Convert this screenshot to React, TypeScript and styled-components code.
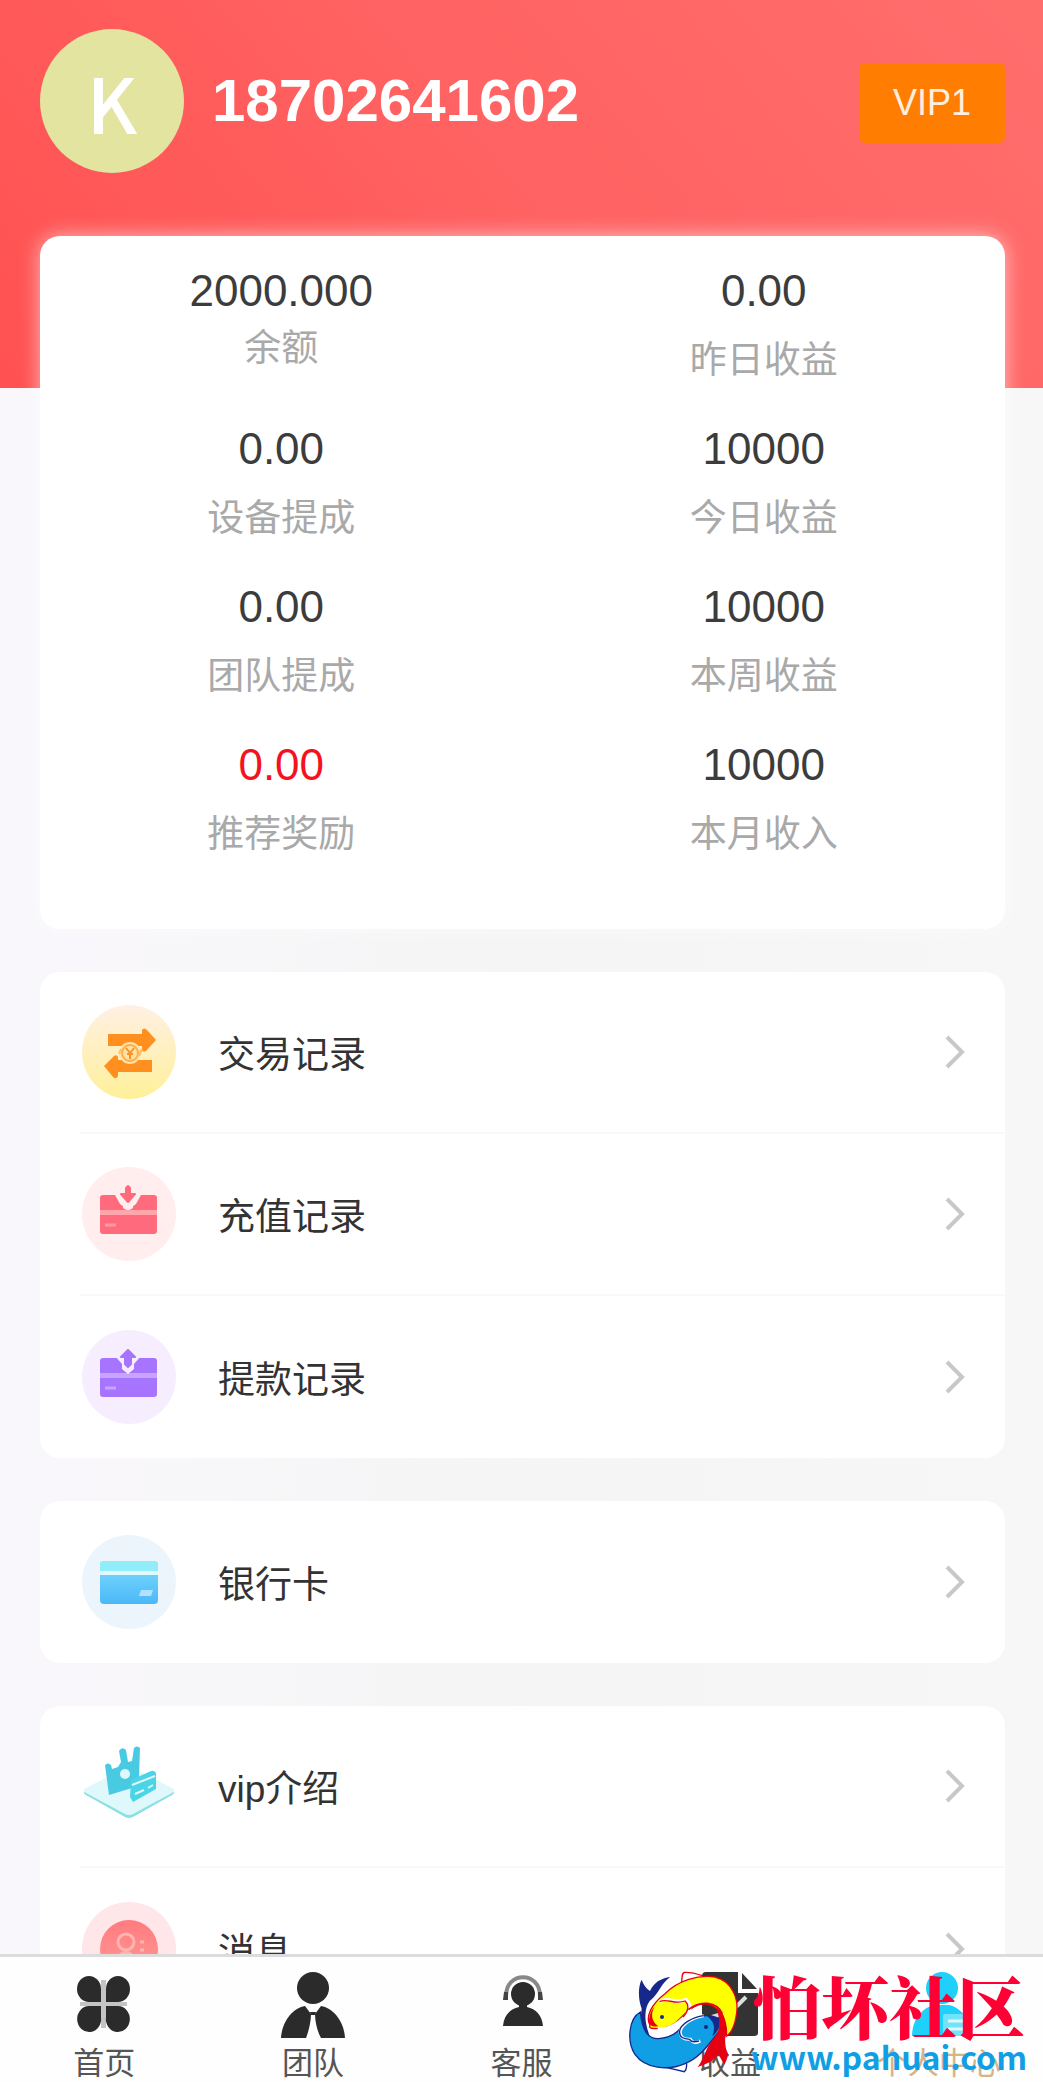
import React from "react";
import styled, { createGlobalStyle } from "styled-components";

type Stat = {
  value: string;
  label: string;
  tight?: boolean;
  highlight?: boolean;
};

type MenuItem = {
  label: string;
  icon: React.ReactNode;
};

type NavItem = {
  label: string;
  icon: React.ReactNode;
  active?: boolean;
};

const GlobalStyle = createGlobalStyle`
  * {
    box-sizing: border-box;
  }

  html,
  body {
    height: 100%;
  }

  body {
    margin: 0;
    background: #f6f6f6;
    color: #333;
    font-family: "Liberation Sans", "Noto Sans CJK SC", sans-serif;
  }

  #root {
    height: 100%;
  }
`;

// icons of the menu rows

const TradeIcon = () => (
  <svg viewBox="0 0 94 94" aria-hidden="true">
    <defs>
      <linearGradient id="tradeBg" x1="0" y1="0" x2="0" y2="1">
        <stop offset="0" stopColor="#fff0e4" />
        <stop offset="1" stopColor="#fff09a" />
      </linearGradient>
    </defs>
    <circle cx="47" cy="47" r="47" fill="url(#tradeBg)" />
    <path d="M26 29H60V25Q62 22 65 25L74 35L64 46Q61 48 60 45V41H26Z" fill="#ff9020" />
    <path d="M70 67H36V71Q34 75 31 72L22 61L32 51Q35 49 36 52V55H70Z" fill="#ff9020" />
    <circle cx="48" cy="48" r="11" fill="#ffe2a8" />
    <circle cx="48" cy="48" r="8" fill="none" stroke="#ffae45" strokeWidth="2" />
    <path d="M44 43L48 48L52 43M48 48V54M45 49H51" fill="none" stroke="#ff9020" strokeWidth="2" />
    <path d="M37 49L39 44M57 51L60 44" stroke="#ffc069" strokeWidth="2" />
  </svg>
);

const DepositIcon = () => (
  <svg viewBox="0 0 94 94" aria-hidden="true">
    <circle cx="47" cy="47" r="47" fill="#ffeeed" />
    <path d="M21 28H33L38 37L46 43L54 37L59 28H72Q75 28 75 31V64Q75 67 72 67H21Q18 67 18 64V31Q18 28 21 28Z" fill="#ff6b7c" />
    <path d="M18 43H75V48H18Z" fill="#ffa5ab" />
    <path d="M41 39H51V41Q46 45 41 41Z" fill="#ffeeed" />
    <path d="M46 19L48 21V27H53L46 35L39 27H44V21Z" fill="#ff6b7c" stroke="#ff6b7c" strokeWidth="2" strokeLinejoin="round" />
    <path d="M23 58H34" stroke="#ff9aa5" strokeWidth="3" />
  </svg>
);

const WithdrawIcon = () => (
  <svg viewBox="0 0 94 94" aria-hidden="true">
    <circle cx="47" cy="47" r="47" fill="#f6edff" />
    <path d="M21 28H72Q75 28 75 31V64Q75 67 72 67H21Q18 67 18 64V31Q18 28 21 28Z" fill="#a774ff" />
    <path d="M18 43H75V48H18Z" fill="#c7a5ff" />
    <path d="M33 26L40 34V39L46 44L52 39V34L59 26Z" fill="#f6edff" />
    <path d="M46 20L53 27H49V34L46 37L43 34V27H39Z" fill="#a774ff" stroke="#a774ff" strokeWidth="2" strokeLinejoin="round" />
    <path d="M23 58H34" stroke="#c7a5ff" strokeWidth="3" />
  </svg>
);

const BankCardIcon = () => (
  <svg viewBox="0 0 94 94" aria-hidden="true">
    <defs>
      <linearGradient id="cardFill" x1="0" y1="0" x2="0" y2="1">
        <stop offset="0" stopColor="#7edcff" />
        <stop offset="1" stopColor="#4bb8f7" />
      </linearGradient>
    </defs>
    <circle cx="47" cy="47" r="47" fill="#edf5fc" />
    <rect x="18" y="26" width="58" height="43" rx="4" fill="url(#cardFill)" />
    <path d="M18 36V30Q18 26 22 26H72Q76 26 76 30V36Z" fill="#92edfa" />
    <path d="M18 36H76V40H18Z" fill="#e1f8ff" />
    <path d="M59 55H71L69 61H57Z" fill="#b0e2ff" />
  </svg>
);

const VipIcon = () => (
  <svg viewBox="0 -8 94 94" aria-hidden="true">
    <path d="M4 43L43 23Q47 21 51 23L90 43Q94 46 90 48L51 70Q47 72 43 70L4 48Q0 46 4 43Z" fill="#8cdfe2" />
    <path d="M4 41L43 21Q47 19 51 21L90 41Q94 43 90 46L51 67Q47 69 43 67L4 46Q0 43 4 41Z" fill="#dff8fb" />
    <path d="M23 18Q26 15 29 18L30 22L36 20L39 15L37 4Q40 -1 44 3L46 15L50 14L52 1Q55 -2 58 1L57 30L50 34V41L27 48Z" fill="#48cbe2" />
    <circle cx="43" cy="27" r="5" fill="#dff8fb" />
    <path d="M49 33L69 24Q72 23 74 26V42L51 55L48 50Z" fill="#4bd4e5" />
    <path d="M50 38L73 29M53 47L62 43M66 41L71 38" stroke="#dff8fb" strokeWidth="2" />
  </svg>
);

const MessageIcon = () => (
  <svg viewBox="0 0 94 94" aria-hidden="true">
    <defs>
      <linearGradient id="msgFill" x1="0" y1="0" x2="0" y2="1">
        <stop offset="0" stopColor="#ff7b80" />
        <stop offset="1" stopColor="#ff9b96" />
      </linearGradient>
    </defs>
    <circle cx="47" cy="47" r="47" fill="#ffe6e8" />
    <circle cx="47" cy="47" r="29" fill="url(#msgFill)" />
    <g fill="none" stroke="#ffb4b0" strokeWidth="3">
      <circle cx="44" cy="40" r="8" />
      <path d="M34 64C34 46 54 46 54 64M58 40H62M58 48H62" />
    </g>
  </svg>
);

const Chevron = () => (
  <svg width="22" height="34" viewBox="0 0 22 34" aria-hidden="true">
    <path d="M3 2L18 17L3 32" fill="none" stroke="#c8c8c8" strokeWidth="4" />
  </svg>
);

// icons of the bottom bar

const HomeIcon = () => (
  <svg viewBox="0 0 64 68" aria-hidden="true">
    <path d="M29 9V57H34V9ZM8 31V35H55V31Z" fill="#c4c4c4" />
    <g fill="#2b2b2b">
      <path d="M29 31V18A12 13 0 1 0 17 31Z" />
      <path d="M34 31V18A12 13 0 1 1 46 31Z" />
      <path d="M29 35V46A12 13 0 1 1 17 35Z" />
      <path d="M34 35V46A12 13 0 1 0 46 35Z" />
    </g>
  </svg>
);

const TeamIcon = () => (
  <svg viewBox="0 0 64 68" aria-hidden="true">
    <g fill="#2b2b2b">
      <circle cx="32" cy="17" r="16" />
      <path d="M0 67C1 50 12 37 24 35L30 43C30 52 27 62 25 67Z" />
      <path d="M64 67C63 50 52 37 40 35L34 43C34 52 37 62 40 67Z" />
      <path d="M29 41H35L34 44H30Z" />
    </g>
  </svg>
);

const ServiceIcon = () => (
  <svg viewBox="0 0 64 68" aria-hidden="true">
    <path d="M17 25C17 0 51 0 51 25" fill="none" stroke="#888" strokeWidth="4" />
    <circle cx="34" cy="23" r="12" fill="#2b2b2b" />
    <path d="M30 30H38V36C47 38 53 44 54 55H14C15 44 21 38 30 36Z" fill="#2b2b2b" />
    <path d="M15 21H19V29H14ZM49 21H53L54 29H49Z" fill="#444" />
  </svg>
);

const IncomeIcon = () => (
  <svg viewBox="0 0 64 68" aria-hidden="true">
    <path d="M8 1H40V22H60V62Q60 65 56 65H8Q4 65 4 61V5Q4 1 8 1Z" fill="#333" />
    <path d="M44 2L59 18H44Z" fill="#333" />
    <path d="M14 46L34 40L48 26" fill="none" stroke="#ddd" strokeWidth="4" />
  </svg>
);

const MineIcon = () => (
  <svg viewBox="0 0 64 68" aria-hidden="true">
    <circle cx="35" cy="17" r="16" fill="#1fd0fb" />
    <path d="M5 65C5 48 16 36 28 34H42C52 36 60 45 62 55V65Z" fill="#1fd0fb" />
    <rect x="36" y="43" width="26" height="22" rx="2" fill="#73e2fb" />
    <path d="M41 50H58M41 58H58" stroke="#ddf9ff" strokeWidth="3" />
  </svg>
);

const FishLogo = () => (
  <svg width="110" height="102" viewBox="12 12 330 306" aria-hidden="true">
    {/* blue fish */}
    <path d="M50 38C56 55 64 64 75 72C88 45 108 34 136 30C108 48 104 78 74 102C58 125 55 160 76 212L58 190C48 165 46 150 50 125C40 100 38 60 50 38Z" fill="#17288b" />
    <path d="M110 298L178 314C188 305 185 290 182 270" fill="#fff" stroke="#17288b" strokeWidth="4" />
    <path d="M46 135C10 155 5 225 30 262C60 305 130 312 180 290C230 270 255 225 285 190C290 170 290 160 280 155C250 135 190 150 165 185C150 205 130 212 100 215C70 215 52 195 46 135Z" fill="#109ee5" stroke="#17288b" strokeWidth="4" />
    <path d="M236 146C205 150 172 170 166 192C164 212 178 218 196 217C204 230 214 227 226 222" fill="none" stroke="#fff" strokeWidth="9" />
    <path d="M236 146C202 150 166 172 164 192C162 212 176 216 194 217C198 226 208 226 222 222" fill="none" stroke="#17288b" strokeWidth="4" />
    <path d="M245 146C265 146 282 152 285 162C285 180 278 195 262 208C272 180 268 164 245 146Z" fill="#17288b" />
    <circle cx="243" cy="180" r="6" fill="#17288b" />
    {/* yellow fish */}
    <path d="M168 50C175 34 166 22 178 16C200 15 215 20 232 26" fill="#fff" stroke="#e60012" strokeWidth="4" />
    <path d="M75 175C60 150 80 110 120 80C160 40 220 22 270 30C320 42 345 95 333 150C328 180 315 200 304 208C308 160 285 120 250 112C220 105 195 125 170 150C145 180 115 185 100 185C85 185 70 185 75 175Z" fill="#ff0" stroke="#e60012" strokeWidth="4" />
    <path d="M104 104C125 88 148 112 182 98C200 112 196 132 180 150C158 172 130 190 98 186" fill="none" stroke="#fff" strokeWidth="11" />
    <path d="M104 104C125 92 148 114 180 102C194 114 190 134 174 150" fill="none" stroke="#e60012" strokeWidth="4" />
    <path d="M90 118C76 140 78 162 100 178C84 180 70 176 72 158C74 140 80 128 90 118Z" fill="#e60012" />
    <circle cx="111" cy="150" r="6" fill="#17288b" />
    <path d="M190 128C225 98 276 104 292 140" fill="none" stroke="#e60012" strokeWidth="5" />
    <path d="M272 122C300 132 305 170 302 195C300 215 298 240 310 262C307 275 302 286 298 293L280 262C265 285 240 292 218 300C240 270 240 245 265 215C285 195 290 160 272 122Z" fill="#e60012" />
  </svg>
);

const stats: Stat[] = [
  { value: "2000.000", label: "余额", tight: true },
  { value: "0.00", label: "昨日收益" },
  { value: "0.00", label: "设备提成" },
  { value: "10000", label: "今日收益" },
  { value: "0.00", label: "团队提成" },
  { value: "10000", label: "本周收益" },
  { value: "0.00", label: "推荐奖励", highlight: true },
  { value: "10000", label: "本月收入" },
];

const menuGroups: MenuItem[][] = [
  [
    { label: "交易记录", icon: <TradeIcon /> },
    { label: "充值记录", icon: <DepositIcon /> },
    { label: "提款记录", icon: <WithdrawIcon /> },
  ],
  [{ label: "银行卡", icon: <BankCardIcon /> }],
  [
    { label: "vip介绍", icon: <VipIcon /> },
    { label: "消息", icon: <MessageIcon /> },
  ],
];

const navItems: NavItem[] = [
  { label: "首页", icon: <HomeIcon /> },
  { label: "团队", icon: <TeamIcon /> },
  { label: "客服", icon: <ServiceIcon /> },
  { label: "收益", icon: <IncomeIcon /> },
  { label: "个人中心", icon: <MineIcon />, active: true },
];

const App = () => {
  return (
    <Page>
      <GlobalStyle />
      <Content>
        <Header>
          <Avatar>K</Avatar>
          <Phone>18702641602</Phone>
          <VipBadge type="button">VIP1</VipBadge>
        </Header>
        <Cards>
          <StatsCard>
            {stats.map((stat) => (
              <StatCell key={stat.label}>
                <StatValue $highlight={stat.highlight}>{stat.value}</StatValue>
                <StatLabel $tight={stat.tight}>{stat.label}</StatLabel>
              </StatCell>
            ))}
          </StatsCard>
          {menuGroups.map((group) => (
            <MenuCard key={group[0].label}>
              {group.map((item) => (
                <MenuRow href="#" key={item.label}>
                  <MenuIcon>{item.icon}</MenuIcon>
                  <MenuLabel>{item.label}</MenuLabel>
                  <Chevron />
                </MenuRow>
              ))}
            </MenuCard>
          ))}
        </Cards>
      </Content>
      <BottomNav>
        {navItems.map((item) => (
          <NavLink href="#" key={item.label} $active={item.active}>
            <NavIcon>{item.icon}</NavIcon>
            <span>{item.label}</span>
          </NavLink>
        ))}
        <SiteMark>
          <FishLogo />
          <SiteText>
            <SiteName>怕坏社区</SiteName>
            <SiteUrl>www.pahuai.com</SiteUrl>
          </SiteText>
        </SiteMark>
      </BottomNav>
    </Page>
  );
};

const Page = styled.div`
  height: 100vh;
  display: flex;
  flex-direction: column;
`;

const Content = styled.main`
  flex: 1;
  min-height: 0;
  overflow: hidden;
  background: linear-gradient(90deg, #f9f7fb 0, #f5f5f5 50%, #f7f7f7 100%);
`;

const Header = styled.header`
  height: 388px;
  padding: 29px 38px 0 40px;
  display: flex;
  align-items: flex-start;
  background: linear-gradient(50deg, #ff5151 0%, #ff6262 50%, #ff6e6c 100%);
`;

const Avatar = styled.div`
  width: 144px;
  height: 144px;
  flex: none;
  border-radius: 50%;
  background: #e2e4a0;
  color: #fff;
  font-family: "Noto Sans CJK SC", sans-serif;
  font-size: 76px;
  font-weight: 500;
  line-height: 144px;
  text-align: center;
`;

const Phone = styled.h1`
  margin: 0 auto 0 28px;
  color: #fff;
  font-size: 60px;
  line-height: 144px;
`;

const VipBadge = styled.button`
  height: 80px;
  margin-top: 34px;
  padding: 0 34px;
  border: 0;
  border-radius: 6px;
  background: #ff7d00;
  color: #ffefe0;
  font-family: inherit;
  font-size: 36px;
`;

const Cards = styled.div`
  margin-top: -152px;
  padding: 0 38px 0 40px;
  display: flex;
  flex-direction: column;
  gap: 43px;
`;

const StatsCard = styled.section`
  padding: 25px 0 36px;
  display: grid;
  grid-template-columns: 1fr 1fr;
  grid-auto-rows: 158px;
  border-radius: 20px;
  background: #fff;
  box-shadow: 0 0 20px rgba(255, 255, 255, 0.6);
`;

const StatCell = styled.div`
  text-align: center;
`;

const StatValue = styled.div<{ $highlight?: boolean }>`
  color: ${(props) => (props.$highlight ? "#f5121f" : "#3c3c3c")};
  font-size: 44px;
  line-height: 60px;
`;

const StatLabel = styled.div<{ $tight?: boolean }>`
  margin-top: ${(props) => (props.$tight ? "4px" : "16px")};
  color: #a9a9a9;
  font-size: 37px;
  line-height: 48px;
`;

const MenuCard = styled.section`
  padding-left: 40px;
  border-radius: 20px;
  background: #fff;
`;

const MenuRow = styled.a`
  height: 162px;
  padding: 0 39px 0 2px;
  display: flex;
  align-items: center;
  color: #333;
  text-decoration: none;

  &:not(:last-child) {
    border-bottom: 2px solid #f9f9f9;
  }
`;

const MenuIcon = styled.span`
  width: 94px;
  height: 94px;
  margin-right: 42px;

  svg {
    display: block;
    width: 100%;
    height: 100%;
  }
`;

const MenuLabel = styled.span`
  flex: 1;
  padding-top: 8px;
  font-size: 37px;
  line-height: 48px;
`;

const BottomNav = styled.nav`
  position: relative;
  flex: none;
  height: 128px;
  display: grid;
  grid-template-columns: repeat(5, 1fr);
  border-top: 3px solid #dcdcdc;
  background: #fefefe;
`;

const NavLink = styled.a<{ $active?: boolean }>`
  padding-top: 14px;
  display: flex;
  flex-direction: column;
  align-items: center;
  color: ${(props) => (props.$active ? "#d6b487" : "#555")};
  font-size: 31px;
  line-height: 40px;
  text-decoration: none;
  white-space: nowrap;
`;

const NavIcon = styled.span`
  width: 64px;
  height: 68px;
  margin-bottom: 5px;

  svg {
    display: block;
    width: 100%;
    height: 100%;
  }
`;

// lies over the last two entries of the bar
const SiteMark = styled.div`
  position: absolute;
  right: 16px;
  bottom: 9px;
  display: flex;
  gap: 12px;
`;

const SiteText = styled.div`
  display: flex;
  flex-direction: column;
  align-items: center;
`;

const SiteName = styled.strong`
  color: #ff0035;
  font-family: "Noto Serif CJK SC", "Noto Sans CJK SC", serif;
  font-size: 68px;
  font-weight: 900;
  line-height: 68px;
`;

const SiteUrl = styled.span`
  color: #109ee5;
  font-family: "Noto Sans CJK SC", sans-serif;
  font-size: 32px;
  font-weight: 700;
  line-height: 34px;
`;

export default App;
